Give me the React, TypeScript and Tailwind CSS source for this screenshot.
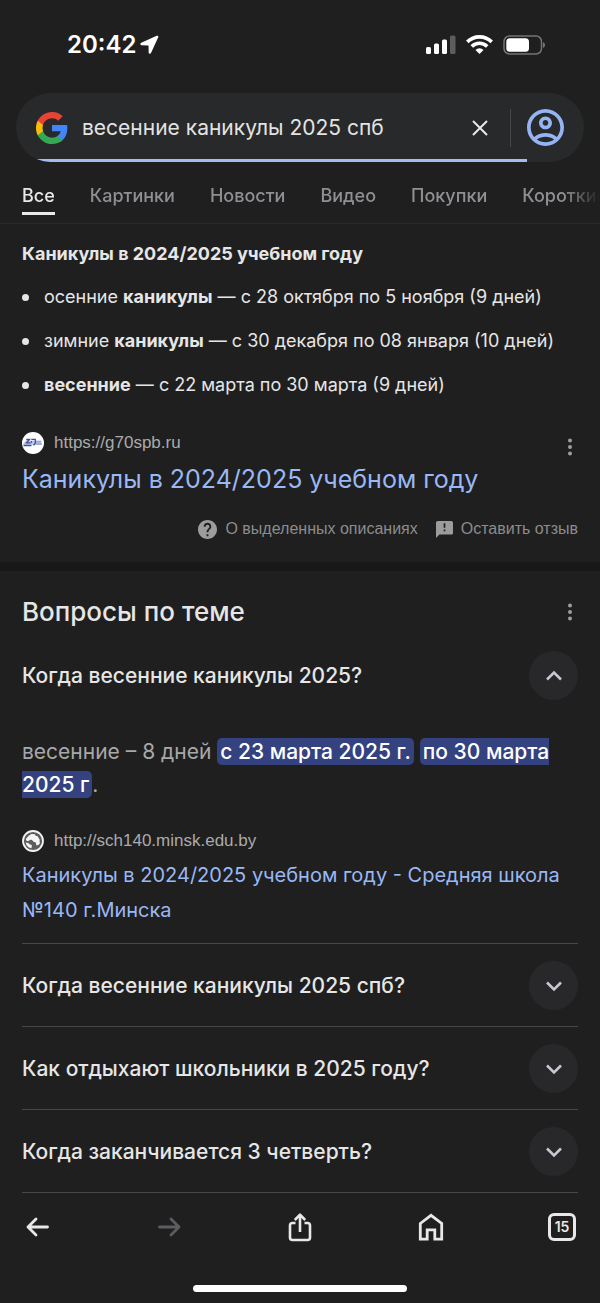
import { useState } from "react";

const TABS = ["Все", "Картинки", "Новости", "Видео", "Покупки", "Короткие видео"];

const QUESTIONS = [
  "Когда весенние каникулы 2025 спб?",
  "Как отдыхают школьники в 2025 году?",
  "Когда заканчивается 3 четверть?",
];

function StatusBar() {
  return (
    <div className="flex h-[93px] items-center justify-between pr-[54px] pl-[67px] pb-[4px] text-white">
      <div className="flex items-center gap-1">
        <span className="text-[24px] leading-none font-semibold">20:42</span>
        <svg className="size-[19px]" viewBox="0 0 20 20" fill="currentColor" aria-hidden="true">
          <path d="M17.600 .8 1.300 8.200C-.1 8.900.2 10.800 1.700 10.900l7 .1c.2 0 .3.100.3.300l.1 7c.1 1.600 2 1.800 2.600.4L19.200 2.400c.5-1.100-.5-2.100-1.600-1.600Z" />
        </svg>
      </div>
      <div className="flex items-center gap-[10px]">
        <svg className="h-[19px] w-[30px]" viewBox="0 0 30 19" fill="currentColor" aria-hidden="true">
          <rect x="0" y="12" width="5" height="7" rx="1.500" />
          <rect x="8" y="8.500" width="5" height="10.500" rx="1.500" />
          <rect x="16" y="4.500" width="5" height="14.500" rx="1.500" />
          <rect x="24" y="0.500" width="5.500" height="18.500" rx="1.500" opacity=".28" />
        </svg>
        <svg className="h-[19px] w-[27px]" viewBox="0 0 27 19" aria-hidden="true">
          <g fill="none" stroke="currentColor" strokeWidth="3.600">
            <path d="M1.300 6.900a17.300 17.300 0 0 1 24.400 0" />
            <path d="M5.800 11.500a10.900 10.900 0 0 1 15.400 0" />
          </g>
          <path fill="currentColor" d="M13.500 19l4-4.100a5.700 5.700 0 0 0-8 0Z" />
        </svg>
        <svg className="h-[20px] w-[43px]" viewBox="0 0 43 20" aria-hidden="true">
          <rect x="1" y="1" width="37.500" height="18" rx="5.500" fill="none" stroke="#747474" strokeWidth="1.500" />
          <rect x="3.300" y="3.300" width="22.700" height="13.400" rx="3.500" fill="currentColor" />
          <path d="M40 7.200c2.700.8 2.700 4.800 0 5.600Z" fill="#747474" />
        </svg>
      </div>
    </div>
  );
}

function GoogleLogo() {
  return (
    <svg className="size-[32px] shrink-0" viewBox="1 1 22 22" aria-hidden="true">
      <path fill="#4285F4" d="M22.560 12.250c0-.78-.07-1.530-.2-2.250H12v4.260h5.920c-.26 1.370-1.040 2.530-2.210 3.310v2.770h3.570c2.080-1.920 3.280-4.740 3.280-8.090z" />
      <path fill="#34A853" d="M12 23c2.970 0 5.460-.98 7.280-2.660l-3.570-2.770c-.98.660-2.230 1.060-3.710 1.060-2.860 0-5.290-1.930-6.160-4.530H2.180v2.840C3.990 20.530 7.700 23 12 23z" />
      <path fill="#FBBC05" d="M5.840 14.090c-.22-.66-.35-1.360-.35-2.090s.13-1.430.35-2.090V7.070H2.180C1.430 8.550 1 10.220 1 12s.43 3.450 1.180 4.930l3.660-2.840z" />
      <path fill="#EA4335" d="M12 5.380c1.620 0 3.060.56 4.210 1.640l3.150-3.150C17.450 2.090 14.970 1 12 1 7.700 1 3.990 3.470 2.180 7.070l3.660 2.840c.87-2.600 3.300-4.530 6.160-4.530z" />
    </svg>
  );
}

function SearchBar() {
  const [query, setQuery] = useState("весенние каникулы 2025 спб");
  return (
    <form
      className="relative mx-4 flex h-[69px] items-center overflow-hidden rounded-full bg-[#28292a] pr-5 pl-5"
      onSubmit={(e) => e.preventDefault()}
    >
      <GoogleLogo />
      <input
        aria-label="Поиск"
        className="ml-[14px] min-w-0 flex-1 bg-transparent text-[21px] text-[#e3e3e3] outline-none"
        value={query}
        onChange={(e) => setQuery(e.target.value)}
      />
      <button type="button" aria-label="Очистить" onClick={() => setQuery("")} className="mr-[22px] text-[#e8e8e8]">
        <svg className="size-4" viewBox="0 0 16 16" stroke="currentColor" strokeWidth="2" aria-hidden="true">
          <path d="M1 1 15 15M15 1 1 15" />
        </svg>
      </button>
      <span className="mr-4 h-[38px] w-px bg-[#47484a]" />
      <button type="button" aria-label="Аккаунт" className="text-[#94b4f4]">
        <svg className="size-[37px]" viewBox="2 2 20 20" fill="currentColor" aria-hidden="true">
          <path d="M12 2C6.480 2 2 6.480 2 12s4.480 10 10 10 10-4.480 10-10S17.520 2 12 2zM7.350 18.500C8.660 17.560 10.260 17 12 17s3.340.56 4.650 1.500C15.340 19.440 13.740 20 12 20s-3.340-.56-4.650-1.500zm10.790-1.380C16.450 15.800 14.320 15 12 15s-4.450.8-6.140 2.120C4.700 15.730 4 13.950 4 12c0-4.420 3.580-8 8-8s8 3.580 8 8c0 1.950-.7 3.730-1.860 5.120zM12 6c-1.930 0-3.500 1.570-3.500 3.500S10.070 13 12 13s3.500-1.570 3.500-3.500S13.930 6 12 6zm0 5c-.83 0-1.500-.67-1.500-1.500S11.170 8 12 8s1.500.67 1.500 1.500S12.830 11 12 11z" />
        </svg>
      </button>
      <span className="absolute bottom-0 left-0 h-[3px] w-[90%] bg-[#a3bdf0]" />
    </form>
  );
}

function Tabs() {
  return (
    <nav className="border-b border-[#292929] pt-[18px]">
      <ul className="flex h-[43px] gap-[35px] overflow-hidden pl-[22px] text-[18px] leading-8 font-medium whitespace-nowrap text-[#8f9094] [mask-image:linear-gradient(to_right,#000_94%,transparent)]">
        {TABS.map((tab, i) => (
          <li key={tab}>
            <a
              href="#"
              className={
                i === 0
                  ? "block h-[35px] border-b-[3px] border-[#e8e8e8] text-[#e8e8e8]"
                  : "block"
              }
            >
              {tab}
            </a>
          </li>
        ))}
      </ul>
    </nav>
  );
}

function MoreButton() {
  return (
    <button type="button" aria-label="Ещё" className="flex h-6 w-4 items-center justify-center text-[#9e9e9e]">
      <svg className="h-[18px] w-1" viewBox="0 0 4 18" fill="currentColor" aria-hidden="true">
        <circle cx="2" cy="2.500" r="2" />
        <circle cx="2" cy="9" r="2" />
        <circle cx="2" cy="15.500" r="2" />
      </svg>
    </button>
  );
}

function SchoolIcon() {
  return (
    <svg className="size-[22px]" viewBox="0 0 22 22" aria-hidden="true">
      <circle cx="11" cy="11" r="11" fill="#fff" />
      <path d="M4 8.500h15.500v4.500H1.500v-2Z" fill="#c3cdea" />
      <g fill="none" stroke="#3d4f9c" strokeWidth="1.300">
        <path d="M4.300 7.500H7.500L4.500 10.800h4.200M9.300 7.300h4v3.700l-1.800 2.300" />
        <path d="M1.500 13.500h8M9.500 9v1.800" />
      </g>
      <path d="M14 9.800h5M14 12h6" stroke="#7f92cc" strokeWidth="1" />
    </svg>
  );
}

function GlobeIcon() {
  return (
    <svg className="size-[22px]" viewBox="0 0 22 22" aria-hidden="true">
      <circle cx="11" cy="11" r="10" fill="#5c5c5c" stroke="#f4f4f4" strokeWidth="1.800" />
      <path
        fill="#f4f4f4"
        d="M7 5.500 9.500 4l3.500.2.600 1.600 2 .5 2 3.200.2 4.200-1.800 1.600h-1.700l-.5-2.700-2.300-.8-1.700-2-1.900.3-1.800 1.100-2.300-.9.400-1.900Z"
      />
      <path fill="#f4f4f4" d="M3.700 12.500l2.500.4 1.800 1.600 1.900.5-.4 3.200-2.700-.7-2.200-2.200Z" />
    </svg>
  );
}

function Source({ icon, url }: { icon: React.ReactNode; url: string }) {
  return (
    <div className="flex h-6 items-center gap-[10px] font-['Liberation_Sans',sans-serif] text-[17px] text-[#ababab]">
      {icon}
      <span>{url}</span>
    </div>
  );
}

function FeaturedSnippet() {
  return (
    <section className="px-[22px] pt-[14px] pb-[21px]">
      <h2 className="text-[18px] leading-8 font-bold">Каникулы в 2024/2025 учебном году</h2>
      <ul className="mt-[11px] flex flex-col gap-3 text-[18px] leading-8 whitespace-nowrap">
        <li className="flex items-center gap-[15px]">
          <span className="size-[7px] rounded-full bg-[#e6e6e6]" />
          <span>осенние <b>каникулы</b> — с 28 октября по 5 ноября (9 дней)</span>
        </li>
        <li className="flex items-center gap-[15px]">
          <span className="size-[7px] rounded-full bg-[#e6e6e6]" />
          <span>зимние <b>каникулы</b> — с 30 декабря по 08 января (10 дней)</span>
        </li>
        <li className="flex items-center gap-[15px]">
          <span className="size-[7px] rounded-full bg-[#e6e6e6]" />
          <span><b>весенние</b> — с 22 марта по 30 марта (9 дней)</span>
        </li>
      </ul>
      <div className="mt-[30px] flex items-start justify-between">
        <div>
          <Source icon={<SchoolIcon />} url="https://g70spb.ru" />
          <a href="#" className="mt-[6px] block text-[25px] leading-9 text-[#99b8f5]">
            Каникулы в 2024/2025 учебном году
          </a>
        </div>
        <div className="pt-1">
          <MoreButton />
        </div>
      </div>
      <div className="mt-5 flex justify-end gap-[18px] font-['Liberation_Sans',sans-serif] text-[16px] leading-6 whitespace-nowrap text-[#8c8c8c]">
        <a href="#" className="flex items-center gap-2">
          <svg className="size-[19px]" viewBox="2 2 20 20" fill="#9c9c9c" aria-hidden="true">
            <path d="M12 2C6.480 2 2 6.480 2 12s4.480 10 10 10 10-4.480 10-10S17.520 2 12 2zm1 17h-2v-2h2v2zm2.070-7.750l-.9.920C13.450 12.900 13 13.500 13 15h-2v-.5c0-1.100.45-2.100 1.170-2.830l1.240-1.260c.37-.36.59-.86.59-1.410 0-1.100-.9-2-2-2s-2 .9-2 2H8c0-2.210 1.790-4 4-4s4 1.790 4 4c0 .88-.36 1.680-.93 2.250z" />
          </svg>
          О выделенных описаниях
        </a>
        <a href="#" className="flex items-center gap-2">
          <svg className="size-[17px]" viewBox="2 2 20 20" fill="#9c9c9c" aria-hidden="true">
            <path d="M20 2H4c-1.100 0-1.990.9-1.990 2L2 22l4-4h14c1.100 0 2-.9 2-2V4c0-1.100-.9-2-2-2zm-7 12h-2v-2h2v2zm0-4h-2V4.500h2V10z" />
          </svg>
          Оставить отзыв
        </a>
      </div>
    </section>
  );
}

function QuestionRow({ text, open }: { text: string; open: boolean }) {
  return (
    <button
      type="button"
      aria-expanded={open}
      className="flex w-full items-center justify-between text-left text-[21px] font-medium"
    >
      {text}
      <span className="flex size-[49px] items-center justify-center rounded-full bg-[#28282a] text-[#c8c6d0]">
        <svg className="h-3 w-4" viewBox="0 0 16 12" fill="none" stroke="currentColor" strokeWidth="2.600" aria-hidden="true">
          <path d={open ? "M1 9.500 8 2.500 15 9.500" : "M1 2.500 8 9.500 15 2.500"} />
        </svg>
      </span>
    </button>
  );
}

function RelatedQuestions() {
  return (
    <section className="px-[22px] pt-[23px]">
      <div className="flex items-center justify-between">
        <h2 className="text-[26px] leading-9 font-medium">Вопросы по теме</h2>
        <MoreButton />
      </div>
      <div className="mt-[21px] border-b border-[#474747] pb-[15px]">
        <QuestionRow text="Когда весенние каникулы 2025?" open />
        <p className="mt-[35px] text-[21px] leading-[33px] text-[#a8a8a8]">
          весенние – 8 дней{" "}
          <mark className="rounded-[5px] bg-[#34427f] px-[3px] py-px font-medium text-white">с 23 марта 2025 г.</mark>{" "}
          <mark className="rounded-[5px] bg-[#34427f] px-[3px] py-px font-medium text-white">по 30 марта 2025 г</mark>.
        </p>
        <div className="mt-7">
          <Source icon={<GlobeIcon />} url="http://sch140.minsk.edu.by" />
        </div>
        <a href="#" className="mt-[5px] block text-[20px] leading-[35px] text-[#99b8f5]">
          Каникулы в 2024/2025 учебном году - Средняя школа №140 г.Минска
        </a>
      </div>
      {QUESTIONS.map((q) => (
        <div key={q} className="border-b border-[#474747] pt-[17px] pb-4">
          <QuestionRow text={q} open={false} />
        </div>
      ))}
    </section>
  );
}

function BrowserToolbar() {
  return (
    <footer className="mt-auto">
      <div className="flex h-[68px] items-center justify-between px-6 text-[#e8e8e8]">
        <button type="button" aria-label="Назад" className="flex w-7 justify-center">
          <svg className="h-5 w-6" viewBox="0 0 24 20" fill="none" stroke="currentColor" strokeWidth="2.800" strokeLinecap="round" strokeLinejoin="round" aria-hidden="true">
            <path d="M21.500 10H2M10 2 2 10l8 8" />
          </svg>
        </button>
        <button type="button" aria-label="Вперёд" disabled className="flex w-7 justify-center text-[#5c5d60]">
          <svg className="h-5 w-6" viewBox="0 0 24 20" fill="none" stroke="currentColor" strokeWidth="2.800" strokeLinecap="round" strokeLinejoin="round" aria-hidden="true">
            <path d="M2.500 10H22M14 2l8 8-8 8" />
          </svg>
        </button>
        <button type="button" aria-label="Поделиться" className="flex w-7 justify-center">
          <svg className="h-[30px] w-6" viewBox="0 0 24 30" fill="none" stroke="currentColor" strokeWidth="2.600" strokeLinejoin="round" aria-hidden="true">
            <path d="M7.500 11H4.500Q2 11 2 13.500V25.500Q2 28 4.500 28h15Q22 28 22 25.500v-12Q22 11 19.500 11h-3M12 20V3M6.800 8 12 2.700 17.200 8" />
          </svg>
        </button>
        <button type="button" aria-label="Домой" className="flex w-7 justify-center">
          <svg className="h-7 w-[26px]" viewBox="0 0 26 28" fill="none" stroke="currentColor" strokeWidth="2.800" aria-hidden="true">
            <path d="M2.300 10.500 13 2.300l10.700 8.200v15.700h-6.900v-9.400H9.200v9.400H2.300Z" />
          </svg>
        </button>
        <button
          type="button"
          aria-label="Вкладки"
          className="flex size-7 items-center justify-center rounded-[6px] border-[3px] border-current text-[14px] leading-none font-semibold"
        >
          15
        </button>
      </div>
      <div className="flex h-[42px] items-end justify-center pb-[11px]">
        <span className="h-[7px] w-[214px] rounded-full bg-white" />
      </div>
    </footer>
  );
}

export default function App() {
  return (
    <div className="flex min-h-screen flex-col bg-[#1f1f1f] font-['Inter','Noto_Sans',sans-serif] text-[#e6e6e6]">
      <StatusBar />
      <SearchBar />
      <Tabs />
      <main>
        <FeaturedSnippet />
        <div className="h-[9px] bg-[#181818]" />
        <RelatedQuestions />
      </main>
      <BrowserToolbar />
    </div>
  );
}
